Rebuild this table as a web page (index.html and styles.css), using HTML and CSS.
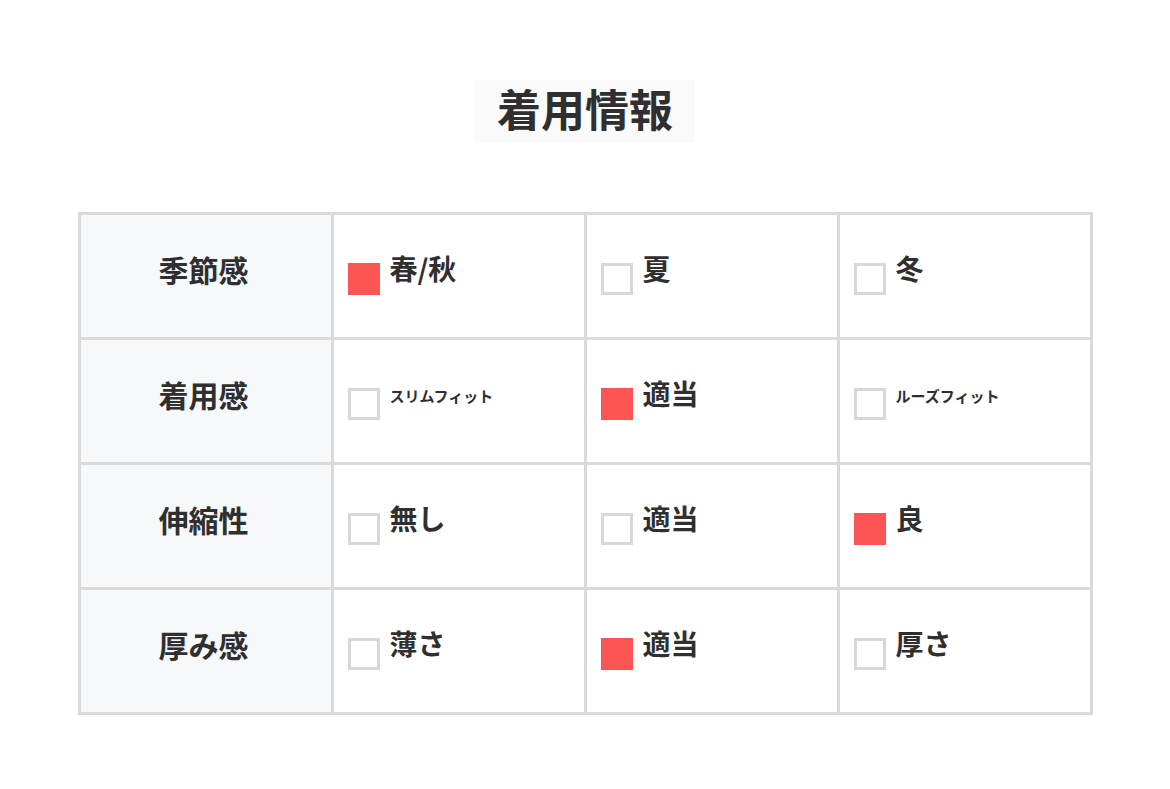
FILE: index.html
```html
<!DOCTYPE html>
<html lang="ja">
<head>
<meta charset="utf-8">
<title>着用情報</title>
<link rel="stylesheet" href="styles.css">
</head>
<body>
<div class="page">
  <div class="title-wrap"><h1 class="title">着用情報</h1></div>
  <div class="table">
    <div class="head">季節感</div>
    <div class="cell"><div class="opt"><span class="box on"></span><span class="label">春/秋</span></div></div>
    <div class="cell"><div class="opt"><span class="box"></span><span class="label">夏</span></div></div>
    <div class="cell"><div class="opt"><span class="box"></span><span class="label">冬</span></div></div>

    <div class="head">着用感</div>
    <div class="cell"><div class="opt"><span class="box"></span><span class="label small">スリムフィット</span></div></div>
    <div class="cell"><div class="opt"><span class="box on"></span><span class="label">適当</span></div></div>
    <div class="cell"><div class="opt"><span class="box"></span><span class="label small">ルーズフィット</span></div></div>

    <div class="head">伸縮性</div>
    <div class="cell"><div class="opt"><span class="box"></span><span class="label">無し</span></div></div>
    <div class="cell"><div class="opt"><span class="box"></span><span class="label">適当</span></div></div>
    <div class="cell"><div class="opt"><span class="box on"></span><span class="label">良</span></div></div>

    <div class="head">厚み感</div>
    <div class="cell"><div class="opt"><span class="box"></span><span class="label">薄さ</span></div></div>
    <div class="cell"><div class="opt"><span class="box on"></span><span class="label">適当</span></div></div>
    <div class="cell"><div class="opt"><span class="box"></span><span class="label">厚さ</span></div></div>
  </div>
</div>
</body>
</html>
```

FILE: styles.css
```css
html, body {
  margin: 0;
  padding: 0;
  background: #ffffff;
}

body {
  font-family: "Noto Sans CJK JP", "Noto Sans", sans-serif;
  color: #2f2f2f;
}

.page {
  width: 1015px;
  margin: 0 auto;
  padding-top: 80px;
}

.title-wrap {
  display: flex;
  justify-content: center;
}

.title {
  margin: 0;
  padding: 0 22px 6px;
  height: 57px;
  font-size: 44px;
  font-weight: 700;
  line-height: 57px;
  background: #fafafa;
  color: #2f2f2f;
}

.table {
  margin-top: 69px;
  display: grid;
  grid-template-columns: repeat(4, 1fr);
  grid-auto-rows: 122px;
  gap: 3px;
  padding: 3px;
  background: #dadada;
}

.head {
  background: #f7f8fa;
  display: flex;
  align-items: center;
  justify-content: center;
  font-size: 30px;
  font-weight: 700;
  padding-bottom: 14px;
  padding-right: 4px;
}

.cell {
  background: #ffffff;
  display: flex;
  align-items: center;
  padding-left: 14px;
  padding-bottom: 6px;
}

.opt {
  display: flex;
  align-items: flex-start;
  gap: 10px;
}

.box {
  width: 32px;
  height: 32px;
  box-sizing: border-box;
  border: 3px solid #d8d8d8;
  background: #ffffff;
  margin-top: 11px;
  flex: none;
}

.box.on {
  border: none;
  background: #fd5454;
}

.label {
  font-size: 28px;
  font-weight: 700;
  line-height: 32px;
}

.label.small {
  font-size: 15px;
  line-height: 20px;
  margin-top: 9px;
}
```
